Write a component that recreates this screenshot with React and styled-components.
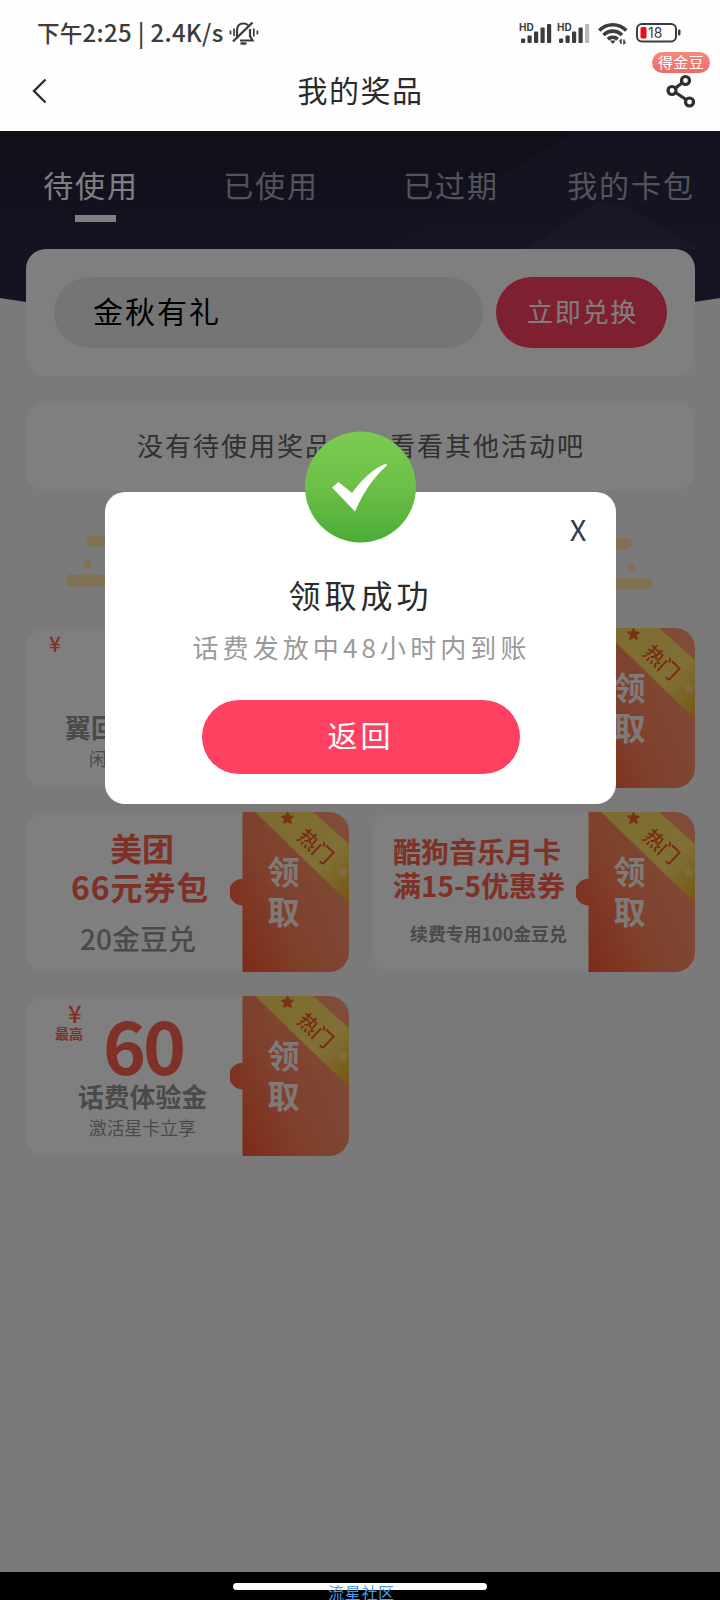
import React from "react";
import styled, { createGlobalStyle } from "styled-components";

const GlobalStyle = createGlobalStyle`
  * {
    box-sizing: border-box;
  }

  body {
    margin: 0;
    background: #000;
    font-family: "Noto Sans CJK SC", "Noto Sans", sans-serif;
  }
`;

const Phone = styled.div`
  width: 720px;
  height: 1600px;
  display: flex;
  flex-direction: column;
  overflow: hidden;
  background: #fefefe;
`;

const StatusBar = styled.div`
  height: 66px;
  padding: 0 39px 0 37px;
  display: flex;
  justify-content: space-between;
  align-items: center;
  color: #3c3c3c;
`;

const StatusGroup = styled.div`
  display: flex;
  align-items: center;
  gap: ${(props) => props.$gap || 0}px;
`;

const StatusText = styled.span`
  font-size: ${(props) => props.$size || 24}px;
  font-weight: 500;
  line-height: 30px;
  margin-top: -3px;
  letter-spacing: 0.3px;
  white-space: pre;
`;

const NavBar = styled.div`
  height: 65px;
  padding: 0 24px 0 32px;
  display: grid;
  grid-template-columns: 60px 1fr 60px;
  align-items: center;
`;

const NavTitle = styled.h1`
  margin: -19px 7px 0 0;
  font-size: 30px;
  font-weight: 400;
  line-height: 36px;
  letter-spacing: 1.5px;
  text-align: center;
  color: #2b2b2b;
`;

const BackIcon = styled.svg`
  margin-top: -15px;
`;

const ShareButton = styled.div`
  position: relative;
  justify-self: end;
  height: 34px;
  margin-top: -15px;
`;

const ShareBadge = styled.span`
  position: absolute;
  right: -14px;
  top: -22px;
  width: 58px;
  height: 21px;
  border-radius: 11px;
  background: linear-gradient(#f28a80, #ee6a69);
  color: #fff;
  font-size: 15px;
  line-height: 19px;
  letter-spacing: 0.4px;
  text-align: center;
`;

const Content = styled.main`
  position: relative;
  height: 1441px;
  background: #f4f4f4;
`;

const Hero = styled.div`
  height: 118px;
`;

const HeroArt = styled.svg`
  position: absolute;
  left: 0;
  top: 0;
`;

const Tabs = styled.div`
  position: relative;
  display: grid;
  grid-template-columns: repeat(4, 180px);
  padding: 32px 0 0 1px;
`;

const Tab = styled.div`
  height: 60px;
  font-size: 30px;
  line-height: 43px;
  letter-spacing: 1.9px;
  text-align: center;
  color: ${(props) => (props.$active ? "#ffffff" : "#aaa5b3")};

  &::after {
    content: "";
    display: ${(props) => (props.$active ? "block" : "none")};
    width: 41px;
    height: 7px;
    margin: 9px 0 0 74px;
    background: #fff;
  }
`;

const Card = styled.section`
  position: relative;
  width: 669px;
  height: ${(props) => props.$height}px;
  margin: 0 auto ${(props) => props.$bottom || 24}px 26px;
  border-radius: 20px;
  background: #fff;
`;

const ExchangeCard = styled(Card)`
  padding: 28px 28px 0;
  display: flex;
  gap: 13px;
`;

const CodeInput = styled.div`
  width: 429px;
  height: 71px;
  padding-left: 39px;
  border-radius: 36px;
  background: #ebebeb;
  color: #000;
  font-size: 30px;
  line-height: 66px;
  letter-spacing: 2px;
`;

const ExchangeButton = styled.button`
  width: 171px;
  height: 71px;
  padding: 0 0 5px 2px;
  border: 0;
  border-radius: 36px;
  background: #ff4060;
  color: #fff;
  font-family: inherit;
  font-size: 26px;
  letter-spacing: 1.8px;
`;

const EmptyCard = styled(Card)`
  padding-left: 1px;
  color: #606060;
  font-size: 26px;
  line-height: 87px;
  letter-spacing: 2px;
  text-align: center;
`;

const SectionTitle = styled.div`
  height: 112px;
  padding: 19px 67px 0 66px;
  display: flex;
  justify-content: space-between;
`;

const CouponGrid = styled.div`
  width: 669px;
  margin-left: 26px;
  display: grid;
  grid-template-columns: 323px 323px;
  gap: 24px 23px;
`;

const Coupon = styled.article`
  height: 160px;
  display: flex;
  border-radius: 20px;
  background: #fff;
  overflow: hidden;
`;

const CouponInfo = styled.div`
  width: 204px;
  display: flex;
  flex-direction: column;
`;

const CouponLine = styled.div`
  height: ${(props) => props.$height}px;
  margin-top: ${(props) => props.$top || 0}px;
  padding-left: ${(props) => props.$left || 0}px;
  font-size: ${(props) => props.$size}px;
  line-height: ${(props) => props.$height}px;
  font-weight: ${(props) => props.$weight || 400};
  letter-spacing: ${(props) => props.$spacing || 0}px;
  color: ${(props) => (props.$accent ? "#ff6350" : "#949494")};
  white-space: nowrap;
`;

const PriceRow = styled.div`
  height: 86px;
  display: flex;
`;

const PriceTag = styled.div`
  width: 77px;
`;

const CouponAction = styled.svg`
  flex: none;
`;

const Overlay = styled.div`
  position: absolute;
  inset: 0;
  background: rgba(0, 0, 0, 0.5);
`;

const Modal = styled.div`
  position: relative;
  width: 511px;
  height: 312px;
  margin: 360.5px 0 0 105px;
  display: flex;
  flex-direction: column;
  align-items: center;
  border-radius: 20px;
  background: #fff;
`;

const SuccessIcon = styled.svg`
  position: absolute;
  left: 199px;
  top: -61.5px;
`;

const CloseButton = styled.button`
  align-self: flex-end;
  width: 40px;
  height: 40px;
  margin: 16px 18px 0 0;
  padding: 0;
  border: 0;
  background: none;
  color: #2c3e50;
  font-family: inherit;
  font-size: 29px;
  line-height: 38px;
`;

const ModalTitle = styled.h2`
  margin: 26px 0 0;
  font-size: 32px;
  font-weight: 400;
  line-height: 40px;
  letter-spacing: 4px;
  color: #2b2b2b;
`;

const ModalText = styled.p`
  margin: 16px 0 0 2px;
  font-size: 26px;
  line-height: 34px;
  letter-spacing: 4.1px;
  color: #9a9a9a;
`;

const ModalButton = styled.button`
  width: 318px;
  height: 74px;
  margin: 36px 0 0;
  padding: 0 0 5px;
  border: 0;
  border-radius: 37px;
  background: #ff4060;
  color: #fff;
  font-family: inherit;
  font-size: 30px;
  letter-spacing: 3px;
`;

const HomeBar = styled.footer`
  height: 28px;
  position: relative;
  background: #000;
  display: flex;
  justify-content: center;
`;

const HomeIndicator = styled.div`
  width: 254px;
  height: 7px;
  margin-top: 11px;
  border-radius: 4px;
  background: #fff;
`;

const Watermark = styled.span`
  position: absolute;
  left: 328px;
  top: 10px;
  font-size: 16px;
  line-height: 20px;
  letter-spacing: 0.7px;
  color: #4a9be8;
`;

const tabs = ["待使用", "已使用", "已过期", "我的卡包"];

function MutedBell() {
  return (
    <svg width="30" height="26" viewBox="0 0 30 26" fill="none" stroke="#3c3c3c" strokeWidth="2.200">
      <path d="M8 17V10.500C8 6 10.500 3.500 14.500 3.500c2 0 3.500.7 4.600 1.700M21 9v7l2.500 4.500H11" />
      <path d="M4 21.500 23.500 2.500" strokeWidth="2.400" />
      <path d="M11.500 23.500h6" strokeWidth="2.400" />
      <path d="M1.500 10.500v4M5 8.500v7.500M24.800 8.500v8M28.400 10.500v4" strokeWidth="1.700" />
    </svg>
  );
}

function Signal({ weak }) {
  return (
    <svg width="33" height="22" viewBox="0 0 33 22" fill="#3c3c3c">
      <text x="0" y="8.500" fontSize="10" fontWeight="700" fontFamily="Inter, sans-serif">
        HD
      </text>
      <rect x="2" y="16.500" width="4.200" height="4.500" rx="1" />
      <rect x="8.500" y="13.500" width="4.200" height="7.500" rx="1" />
      <rect x="15" y="9.500" width="4.200" height="11.500" rx="1" />
      <rect x="21.500" y="5.500" width="4.200" height="15.500" rx="1" />
      <rect x="28" y="2" width="4.200" height="19" rx="1" fill={weak ? "#b8b8b8" : "#3c3c3c"} />
    </svg>
  );
}

function Wifi() {
  return (
    <svg width="30" height="23" viewBox="0 0 30 23" fill="none" stroke="#3c3c3c" strokeWidth="3.600">
      <path d="M1.200 8.500C9 .8 20.500.8 28.300 8.500" />
      <path d="M5.500 13c5.500-5.200 13-5.200 18.500 0" />
      <path d="M9.800 17.200c3-2.600 7-2.600 10 0" />
      <path d="M11.800 18.500h6L14.800 22z" fill="#3c3c3c" stroke="none" />
      <path d="M23 22v-4l-1.500 1.500M26 17.500v4l1.500-1.500" strokeWidth="1.500" />
    </svg>
  );
}

function Battery() {
  return (
    <svg width="45" height="20" viewBox="0 0 45 20">
      <rect x="1" y="1" width="39" height="17.500" rx="5" fill="none" stroke="#3c3c3c" strokeWidth="2" />
      <rect x="4.500" y="4" width="6" height="11.500" rx="1.500" fill="#e60f14" />
      <rect x="42" y="6.500" width="2.500" height="6" rx="1" fill="#3c3c3c" />
      <text x="12" y="14.800" fontSize="14" fill="#3c3c3c" fontFamily="Inter, sans-serif">
        18
      </text>
    </svg>
  );
}

function TakeCoupon({ id }) {
  return (
    <CouponAction width="119" height="160" viewBox="0 0 119 160">
      <defs>
        <linearGradient id={`base-${id}`} x1="0" y1="0.8" x2="1" y2="0.2">
          <stop offset="0" stopColor="#fb5732" />
          <stop offset="0.4" stopColor="#ff8058" />
          <stop offset="1" stopColor="#ff9a72" />
        </linearGradient>
        <linearGradient id={`ribbon-${id}`} x1="0" y1="0" x2="1" y2="1">
          <stop offset="0" stopColor="#f8d75c" />
          <stop offset="0.65" stopColor="#ffe06a" />
          <stop offset="1" stopColor="#eeac20" />
        </linearGradient>
      </defs>
      <path d="M12.500 0H119V160H12.500V93.300A13.300 13.300 0 0 1 12.500 66.700Z" fill={`url(#base-${id})`} />
      <path d="M25 0H83L119 32V91Z" fill={`url(#ribbon-${id})`} />
      <path
        d="M57.500 0l1.900 3.800 4.100.5-3 3 .8 4.200-3.800-1.900-3.800 1.900.8-4.200-3-3 4.100-.5z"
        fill="#f0662c"
        stroke="#f0662c"
        strokeLinejoin="round"
      />
      <path d="M113 54l2 3.500 4 1-3 3 .5 4-3.500-2-3.500 2 .5-4-3-3 4-1z" fill="#ffd97a" />
      <text
        x="86"
        y="42"
        transform="rotate(43 86 34)"
        textAnchor="middle"
        fontSize="20"
        fontWeight="500"
        fill="#f4552a"
      >
        热门
      </text>
      <g fontSize="32" fontWeight="700" fill="#fff4ee" textAnchor="middle">
        <text x="53.500" y="72">
          领
        </text>
        <text x="53.500" y="112">
          取
        </text>
      </g>
    </CouponAction>
  );
}

function TitleMarks({ right }) {
  return (
    <svg width="60" height="60" viewBox="0 0 60 60" fill="#ffe2a2">
      {right ? (
        <g transform="translate(0 3)">
          <rect x="0" y="0" width="39" height="11" rx="5" />
          <circle cx="38.500" cy="29" r="3.800" />
          <rect x="0" y="40" width="60" height="11" rx="5" />
        </g>
      ) : (
        <g transform="translate(0 0.500)">
          <rect x="21" y="0" width="39" height="11" rx="4" />
          <circle cx="21.500" cy="29" r="4" />
          <rect x="0" y="39" width="60" height="12" rx="4" />
        </g>
      )}
    </svg>
  );
}

export default function App() {
  return (
    <Phone>
      <GlobalStyle />
      <StatusBar>
        <StatusGroup $gap={5}>
          <StatusText>
            <StatusText $size={22.5}>下午</StatusText>2:25 | 2.4K/s
          </StatusText>
          <MutedBell />
        </StatusGroup>
        <StatusGroup $gap={8}>
          <StatusGroup $gap={5}>
            <Signal />
            <Signal weak />
          </StatusGroup>
          <Wifi />
          <Battery />
        </StatusGroup>
      </StatusBar>
      <NavBar>
        <BackIcon width="16" height="28" viewBox="0 0 16 28" fill="none">
          <path d="M13.500 2.500 2 14l11.500 11.500" stroke="#2f2f2f" strokeWidth="2.400" />
        </BackIcon>
        <NavTitle>我的奖品</NavTitle>
        <ShareButton>
          <ShareBadge>得金豆</ShareBadge>
          <svg width="30" height="34" viewBox="0 0 30 34" fill="none" stroke="#2f2f2f" strokeWidth="3.200">
            <circle cx="19.500" cy="6.500" r="4" />
            <circle cx="6" cy="16.500" r="4" />
            <circle cx="23.500" cy="28" r="4" />
            <path d="M16 9 9.500 14M9.500 18.500l10.500 7" />
          </svg>
        </ShareButton>
      </NavBar>
      <Content>
        <HeroArt width="720" height="180" viewBox="0 0 720 180">
          <defs>
            <linearGradient id="hero" x1="0" y1="0" x2="0" y2="1">
              <stop offset="0" stopColor="#1e2030" />
              <stop offset="0.4" stopColor="#28223f" />
              <stop offset="1" stopColor="#2e2547" />
            </linearGradient>
          </defs>
          <path d="M0 0H720V167Q360 226 0 167Z" fill="url(#hero)" />
          <path d="M575 0H720V167L560 190 380 118Z" fill="#30304f" opacity="0.400" />
          <path d="M524 118 600 70 626 75 700 118Z" fill="#453b55" opacity="0.350" />
        </HeroArt>
        <Hero>
          <Tabs>
            {tabs.map((tab, index) => (
              <Tab key={tab} $active={index === 0}>
                {tab}
              </Tab>
            ))}
          </Tabs>
        </Hero>
        <ExchangeCard $height={127} $bottom={25}>
          <CodeInput>金秋有礼</CodeInput>
          <ExchangeButton>立即兑换</ExchangeButton>
        </ExchangeCard>
        <EmptyCard $height={90} $bottom={25}>
          没有待使用奖品，去看看其他活动吧
        </EmptyCard>
        <SectionTitle>
          <TitleMarks />
          <TitleMarks right />
        </SectionTitle>
        <CouponGrid>
          <Coupon>
            <CouponInfo>
              <CouponLine $accent $size={21} $weight={500} $height={22} $top={4} $left={23}>
                ¥
              </CouponLine>
              <CouponLine $size={26} $weight={700} $height={32} $top={57} $left={39}>
                翼回
              </CouponLine>
              <CouponLine $size={17.7} $height={24} $top={3} $left={63}>
                闲
              </CouponLine>
            </CouponInfo>
            <TakeCoupon id="recycle" />
          </Coupon>
          <Coupon>
            <CouponInfo />
            <TakeCoupon id="fee" />
          </Coupon>
          <Coupon>
            <CouponInfo>
              <CouponLine $accent $size={32} $weight={700} $height={39} $top={16} $left={84}>
                美团
              </CouponLine>
              <CouponLine $accent $size={32} $weight={700} $height={39} $left={45} $spacing={0.9}>
                66元券包
              </CouponLine>
              <CouponLine $size={28} $weight={500} $height={36} $top={14} $left={54}>
                20金豆兑
              </CouponLine>
            </CouponInfo>
            <TakeCoupon id="meituan" />
          </Coupon>
          <Coupon>
            <CouponInfo>
              <CouponLine $accent $size={28} $weight={700} $height={34} $top={22} $left={21}>
                酷狗音乐月卡
              </CouponLine>
              <CouponLine $accent $size={28} $weight={700} $height={34} $left={21}>
                满15-5优惠券
              </CouponLine>
              <CouponLine $size={17.9} $weight={700} $height={24} $top={19} $left={38}>
                续费专用100金豆兑
              </CouponLine>
            </CouponInfo>
            <TakeCoupon id="kugou" />
          </Coupon>
          <Coupon>
            <CouponInfo>
              <PriceRow>
                <PriceTag>
                  <CouponLine $accent $size={24} $weight={500} $height={24} $top={5} $left={42}>
                    ¥
                  </CouponLine>
                  <CouponLine $accent $size={14} $weight={700} $height={14} $top={1} $left={29}>
                    最高
                  </CouponLine>
                </PriceTag>
                <CouponLine $accent $size={73} $weight={700} $height={95} $spacing={-3}>
                  60
                </CouponLine>
              </PriceRow>
              <CouponLine $size={25.8} $weight={700} $height={28} $left={52}>
                话费体验金
              </CouponLine>
              <CouponLine $size={17.8} $height={24} $top={5} $left={63}>
                激活星卡立享
              </CouponLine>
            </CouponInfo>
            <TakeCoupon id="trial" />
          </Coupon>
        </CouponGrid>
        <Overlay>
          <Modal>
            <SuccessIcon width="113" height="113" viewBox="0 0 113 113">
              <defs>
                <linearGradient id="success" x1="0" y1="0" x2="0" y2="1">
                  <stop offset="0" stopColor="#7ccb52" />
                  <stop offset="0.5" stopColor="#6cc048" />
                  <stop offset="1" stopColor="#4aac36" />
                </linearGradient>
              </defs>
              <circle cx="56.500" cy="57" r="55.500" fill="url(#success)" />
              <path
                d="M28 57.500 34.500 52 48 63C57 50.500 69 38.500 82 33.500L83 35.500C70 47 60 61 51 81.500Z"
                fill="#fff"
              />
            </SuccessIcon>
            <CloseButton>X</CloseButton>
            <ModalTitle>领取成功</ModalTitle>
            <ModalText>话费发放中48小时内到账</ModalText>
            <ModalButton>返回</ModalButton>
          </Modal>
        </Overlay>
      </Content>
      <HomeBar>
        <HomeIndicator />
        <Watermark>流星社区</Watermark>
      </HomeBar>
    </Phone>
  );
}
